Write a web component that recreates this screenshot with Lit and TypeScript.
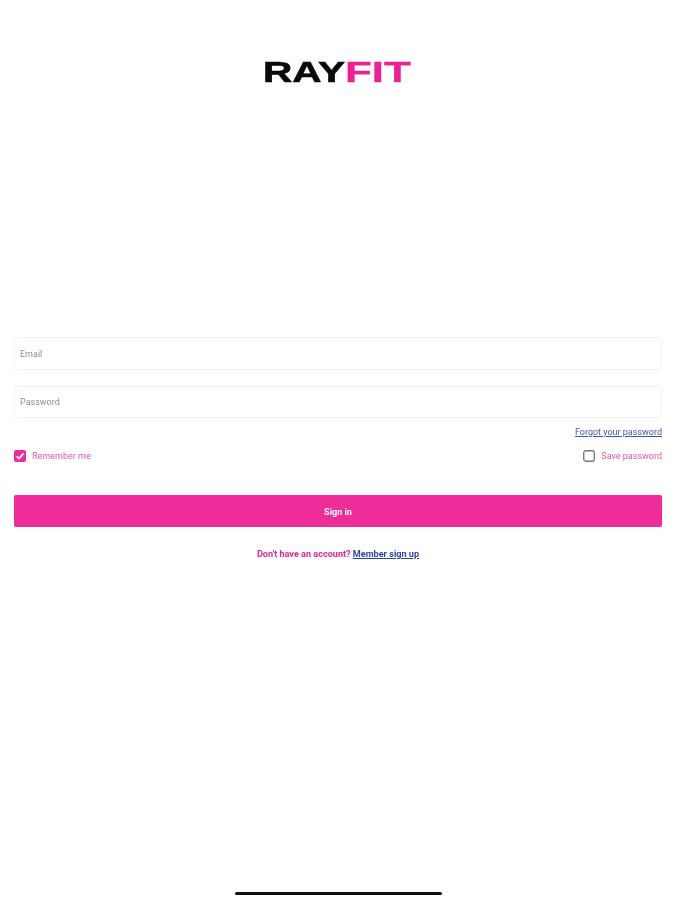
import { LitElement, html, css } from "lit";
import { customElement } from "lit/decorators.js";

@customElement("app-root")
export class AppRoot extends LitElement {
  static styles = css`
    :host {
      display: block;
      width: 675px;
      height: 900px;
      background: #fff;
      overflow: hidden;
      font-family: Roboto, "Liberation Sans", sans-serif;
    }
    .page {
      height: 900px;
      box-sizing: border-box;
      display: flex;
      flex-direction: column;
      filter: blur(0.6px);
    }
    .logo {
      height: 337px;
      box-sizing: border-box;
      padding-top: 56px;
      display: flex;
      justify-content: flex-start;
      align-items: flex-start;
      padding-left: 263px;
      font-family: "Liberation Sans", sans-serif;
      font-weight: 700;
      font-size: 29px;
      line-height: 33px;
    }
    .ray {
      color: #0b0b0d;
      display: inline-block;
      width: 82px;
      white-space: nowrap;
      transform-origin: left center;
      transform: scaleX(1.4);
      -webkit-text-stroke: 0.6px #0b0b0d;
    }
    .fit {
      color: #f01e96;
      display: inline-block;
      width: 64px;
      white-space: nowrap;
      transform-origin: left center;
      transform: scaleX(1.51);
      -webkit-text-stroke: 0.3px #f01e96;
    }
    .form {
      padding: 0 13px 0 14px;
      display: flex;
      flex-direction: column;
    }
    .field {
      height: 33px;
      box-sizing: border-box;
      border: 1px solid #f3f3f3;
      border-radius: 3px;
      padding: 0 5px;
      display: flex;
      align-items: center;
      font-size: 9px;
      color: #8e8e8e;
    }
    .field + .field {
      margin-top: 16px;
      height: 32px;
    }
    .forgot-row {
      display: flex;
      justify-content: flex-end;
      margin-top: 7px;
      height: 14px;
      align-items: center;
    }
    .forgot {
      font-size: 9px;
      color: #3f55b5;
      text-decoration: underline;
    }
    .checks {
      display: flex;
      justify-content: space-between;
      align-items: center;
      margin-top: 10px;
      height: 14px;
    }
    .check {
      display: flex;
      align-items: center;
      gap: 6px;
      font-size: 9px;
      color: #f0569f;
    }
    .box {
      display: block;
      width: 12px;
      height: 12px;
    }
    .signin {
      margin-top: 32px;
      height: 32px;
      box-sizing: border-box;
      padding-top: 1px;
      border-radius: 2px;
      background: #ee2d9b;
      color: #fff;
      display: flex;
      align-items: center;
      justify-content: center;
      font-size: 9px;
      font-weight: 700;
    }
    .signup {
      margin-top: 21px;
      text-align: center;
      font-size: 9.1px;
      line-height: 13px;
      font-weight: 700;
      color: #e0288f;
    }
    .signup span {
      color: #2a46ad;
      text-decoration: underline;
    }
    .home {
      margin: auto 0 5px 235px;
      width: 207px;
      height: 3px;
      border-radius: 2px;
      background: #111;
    }
  `;

  render() {
    return html`
      <div class="page">
        <div class="logo"><span class="ray">RAY</span><span class="fit">FIT</span></div>
        <div class="form">
          <div class="field">Email</div>
          <div class="field">Password</div>
          <div class="forgot-row"><span class="forgot">Forgot your password</span></div>
          <div class="checks">
            <div class="check">
              <svg class="box" viewBox="0 0 12 12">
                <rect width="12" height="12" rx="2" fill="#ee2d9b"></rect>
                <path d="M2.6 6.2 5 8.6 9.6 3.4" fill="none" stroke="#fff" stroke-width="1.6"></path>
              </svg>
              Remember me
            </div>
            <div class="check">
              <svg class="box" viewBox="0 0 12 12">
                <rect x="0.75" y="0.75" width="10.5" height="10.5" rx="2" fill="none" stroke="#777" stroke-width="1.3"></rect>
              </svg>
              Save password
            </div>
          </div>
          <div class="signin">Sign in</div>
          <div class="signup">Don't have an account? <span>Member sign up</span></div>
        </div>
        <div class="home"></div>
      </div>
    `;
  }
}
